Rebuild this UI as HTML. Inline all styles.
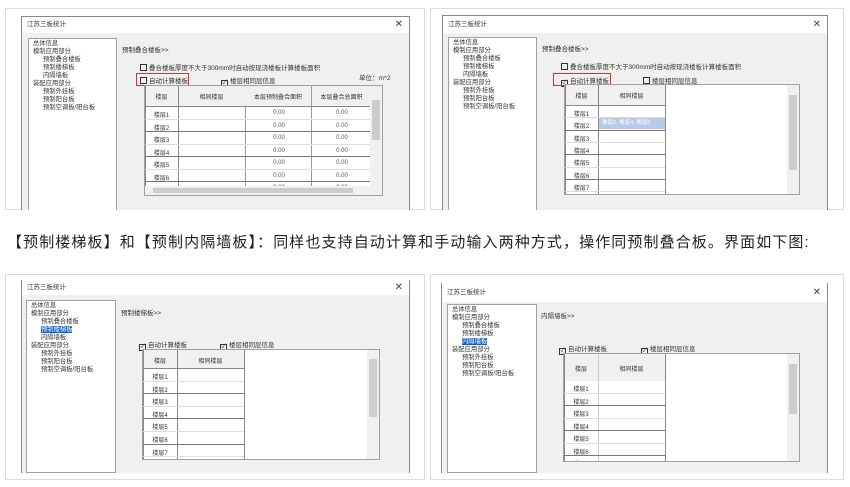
<!DOCTYPE html>
<html><head><meta charset="utf-8"><style>
*{margin:0;padding:0;box-sizing:border-box}
body{width:850px;height:487px;background:#fff;position:relative;overflow:hidden;font-family:"Liberation Sans","Noto Sans CJK SC",sans-serif;color:#222}
.a{position:absolute}
.frame{position:absolute;border:1px solid #dcdcdc;background:#fff}
.dlg{position:absolute;border:1px solid #8a8a8a;background:#f0f0f0;overflow:hidden}
.tb{position:absolute;left:0;top:0;right:0;background:#fff;font-size:6.5px;padding-left:5px;color:#333}
.x{position:absolute;right:6px;font-size:10px;color:#444}
.tree{position:absolute;background:#fff;border:1px solid #a0a0a0;font-size:6.3px;line-height:8px;padding:1px 4px;color:#333;white-space:nowrap}
.tree div{height:8px}
.tree div.i{padding-left:10px}
.sel{background:#0a64c8;color:#fff}
.t{font-size:6.5px;color:#333;white-space:nowrap}
.cb{display:inline-block;width:7px;height:7px;border:1px solid #333;vertical-align:-1px;margin-right:2px;font-size:6px;line-height:5px;text-align:center}
.red{position:absolute;border:1.5px solid #e0312b}
.tbl{position:absolute;background:#fff;border:1px solid #a0a0a0;overflow:hidden}
.g{position:absolute;font-size:6px;color:#333;text-align:center}
.sb{position:absolute;top:0;bottom:0;width:12px;background:#f0f0f0}
.th{position:absolute;width:8px;left:2px;background:#cdcdcd}
</style></head><body>

<!-- TOP LEFT -->
<div class="frame" style="left:5px;top:8px;width:420px;height:202px"></div>
<div class="dlg" style="left:21px;top:16px;width:389px;height:194px;border-bottom:none">
 <div class="tb" style="height:16px;line-height:16px">江苏三板统计<span class="x" style="top:0">✕</span></div>
 <div class="tree" style="left:6px;top:21px;width:89px;height:175px"><div>总体信息</div><div>模制应用部分</div><div class="i">预制叠合楼板</div><div class="i">预制楼梯板</div><div class="i">内隔墙板</div><div>装配应用部分</div><div class="i">预制外挂板</div><div class="i">预制阳台板</div><div class="i">预制空调板/阳台板</div></div>
 <div class="a t" style="left:100px;top:27px">预制叠合楼板&gt;&gt;</div>
 <div class="a t" style="left:118px;top:45px"><span class="cb"></span>叠合楼板厚度不大于300mm时自动按现浇楼板计算楼板面积</div>
 <div class="a t" style="left:118px;top:58px"><span class="cb"></span>自动计算楼板</div>
 <div class="red" style="left:114px;top:56px;width:53px;height:13px"></div>
 <div class="a t" style="left:199px;top:58px"><span class="cb">✓</span>楼层相同层信息</div>
 <div class="a t" style="left:337px;top:55px">单位：m^2</div>
</div>
<div class="tbl" style="left:144px;top:85px;width:239px;height:111px">
 <div class="a" style="left:0;top:0;width:227px;height:21px;background:#f0f0f0"></div>
 <div class="a" style="left:33px;top:0;width:1px;height:111px;background:#888"></div>
 <div class="a" style="left:0;top:0;width:1px;height:111px;background:#888"></div>
 <div class="a" style="left:100px;top:21px;width:1px;height:90px;background:#999"></div>
 <div class="a" style="left:166px;top:0;width:1px;height:111px;background:#999"></div>
 <div class="a" style="left:0;top:20px;width:227px;height:1px;background:#888"></div>
 <div class="g" style="left:0;top:6px;width:33px">楼层</div><div class="g" style="left:33px;top:6px;width:67px">相同楼层</div><div class="g" style="left:100px;top:6px;width:66px">本层预制叠合面积</div><div class="g" style="left:166px;top:6px;width:61px">本层叠合总面积</div>
 <div id="r1"></div>
 <div class="sb" style="right:0"><div class="th" style="top:14px;height:40px"></div></div>
 <div class="a" style="left:0;bottom:0;width:227px;height:9px;background:#f0f0f0"><div class="a" style="left:8px;top:2px;width:200px;height:5px;background:#cdcdcd"></div></div>
</div>

<!-- TOP RIGHT -->
<div class="frame" style="left:430px;top:8px;width:414px;height:202px"></div>
<div class="dlg" style="left:442px;top:15px;width:386px;height:195px;border-bottom:none">
 <div class="tb" style="height:17px;line-height:17px">江苏三板统计<span class="x" style="top:0">✕</span></div>
 <div class="tree" style="left:5px;top:21px;width:89px;height:175px"><div>总体信息</div><div>模制应用部分</div><div class="i">预制叠合楼板</div><div class="i">预制楼梯板</div><div class="i">内隔墙板</div><div>装配应用部分</div><div class="i">预制外挂板</div><div class="i">预制阳台板</div><div class="i">预制空调板/阳台板</div></div>
 <div class="a t" style="left:99px;top:27px">预制叠合楼板&gt;&gt;</div>
 <div class="a t" style="left:118px;top:45px"><span class="cb"></span>叠合楼板厚度不大于300mm时自动按现浇楼板计算楼板面积</div>
 <div class="a t" style="left:118px;top:59px"><span class="cb">✓</span>自动计算楼板</div>
 <div class="red" style="left:110px;top:57px;width:58px;height:13px"></div>
 <div class="a t" style="left:200px;top:59px"><span class="cb"></span>楼层相同层信息</div>
</div>
<div class="tbl" style="left:564px;top:84px;width:236px;height:111px">
 <div class="a" style="left:0;top:0;width:100px;height:21px;background:#f0f0f0"></div>
 <div class="a" style="left:0;top:0;width:1px;height:111px;background:#888"></div>
 <div class="a" style="left:33px;top:0;width:1px;height:111px;background:#888"></div>
 <div class="a" style="left:100px;top:0;width:1px;height:111px;background:#888"></div>
 <div class="a" style="left:0;top:20px;width:100px;height:1px;background:#888"></div>
 <div class="g" style="left:0;top:6px;width:33px">楼层</div><div class="g" style="left:33px;top:6px;width:67px">相同楼层</div>
 <div class="a" style="left:34px;top:32px;width:66px;height:12px;background:#b7cbe8;font-size:5.5px;color:#fff;line-height:12px;padding-left:3px">楼层2, 楼层4, 楼层5</div>
 <div id="r2"></div>
 <div class="sb" style="right:0"><div class="th" style="top:10px;height:75px"></div></div>
</div>

<!-- MIDDLE TEXT -->
<div class="a" style="left:7px;top:231px;font-size:15px;letter-spacing:1.1px;white-space:nowrap;color:#222">【预制楼梯板】和【预制内隔墙板】：同样也支持自动计算和手动输入两种方式，操作同预制叠合板。界面如下图:</div>

<!-- BOTTOM LEFT -->
<div class="frame" style="left:5px;top:274px;width:420px;height:206px"></div>
<div class="dlg" style="left:21px;top:280px;width:389px;height:193px;border-top:none;border-bottom:none">
 <div class="tb" style="height:15px;line-height:15px">江苏三板统计<span class="x" style="top:0">✕</span></div>
 <div class="tree" style="left:4px;top:20px;width:90px;height:173px"><div>总体信息</div><div>模制应用部分</div><div class="i">预制叠合楼板</div><div class="i"><span class="sel">预制楼梯板</span></div><div class="i">内隔墙板</div><div>装配应用部分</div><div class="i">预制外挂板</div><div class="i">预制阳台板</div><div class="i">预制空调板/阳台板</div></div>
 <div class="a t" style="left:99px;top:27px">预制楼梯板&gt;&gt;</div>
 <div class="a t" style="left:117px;top:59px"><span class="cb">✓</span>自动计算楼板</div>
 <div class="a t" style="left:198px;top:59px"><span class="cb">✓</span>楼层相同层信息</div>
</div>
<div class="tbl" style="left:142px;top:349px;width:238px;height:111px">
 <div class="a" style="left:0;top:0;width:101px;height:18px;background:#f0f0f0"></div>
 <div class="a" style="left:0;top:0;width:1px;height:111px;background:#888"></div>
 <div class="a" style="left:34px;top:0;width:1px;height:111px;background:#888"></div>
 <div class="a" style="left:101px;top:0;width:1px;height:111px;background:#888"></div>
 <div class="a" style="left:0;top:18px;width:101px;height:1px;background:#888"></div>
 <div class="g" style="left:0;top:6px;width:34px">楼层</div><div class="g" style="left:34px;top:6px;width:67px">相同楼层</div>
 <div id="r3"></div>
 <div class="sb" style="right:0"><div class="th" style="top:9px;height:58px"></div></div>
</div>

<!-- BOTTOM RIGHT -->
<div class="frame" style="left:430px;top:274px;width:414px;height:206px"></div>
<div class="dlg" style="left:441px;top:283px;width:387px;height:190px;border-top:none;border-bottom:none">
 <div class="tb" style="height:19px;line-height:19px">江苏三板统计<span class="x" style="top:0">✕</span></div>
 <div class="tree" style="left:5px;top:21px;width:90px;height:169px"><div>总体信息</div><div>模制应用部分</div><div class="i">预制叠合楼板</div><div class="i">预制楼梯板</div><div class="i"><span class="sel">内隔墙板</span></div><div>装配应用部分</div><div class="i">预制外挂板</div><div class="i">预制阳台板</div><div class="i">预制空调板/阳台板</div></div>
 <div class="a t" style="left:99px;top:27px">内隔墙板&gt;&gt;</div>
 <div class="a t" style="left:117px;top:60px"><span class="cb">✓</span>自动计算楼板</div>
 <div class="a t" style="left:199px;top:60px"><span class="cb">✓</span>楼层相同层信息</div>
</div>
<div class="tbl" style="left:563px;top:353px;width:237px;height:109px">
 <div class="a" style="left:0;top:0;width:101px;height:27px;background:#f0f0f0"></div>
 <div class="a" style="left:0;top:0;width:1px;height:109px;background:#888"></div>
 <div class="a" style="left:34px;top:0;width:1px;height:109px;background:#ccc"></div>
 <div class="a" style="left:101px;top:0;width:1px;height:109px;background:#888"></div>
 <div class="g" style="left:0;top:10px;width:34px">楼层</div><div class="g" style="left:34px;top:10px;width:67px">相同楼层</div>
 <div id="r4"></div>
 <div class="sb" style="right:0"><div class="th" style="top:10px;height:50px"></div></div>
</div>

<script>
function rows(id,top,h,n,w,lw,lab,vals){
 var el=document.getElementById(id),s='';
 for(var i=0;i<n;i++){var y=top+i*h;
  s+='<div class="a" style="left:0;top:'+(y+h-1)+'px;width:'+w+'px;height:1px;background:'+(i%2?'#777':'#ddd')+'"></div>';
  s+='<div class="g" style="left:0;top:'+(y+3)+'px;width:'+lw+'px">'+lab+(i+1)+'</div>';
  if(vals){s+='<div class="g" style="left:101px;top:'+(y+3)+'px;width:66px;color:#555">0.00</div><div class="g" style="left:167px;top:'+(y+3)+'px;width:60px;color:#555">0.00</div>';}
 }
 el.outerHTML=s;
}
rows('r1',21,12.5,7,227,33,'楼层',true);
rows('r2',21,12.3,8,100,33,'楼层',false);
rows('r3',19,12.6,8,101,34,'楼层',false);
rows('r4',27,12.5,7,101,34,'楼层',false);
</script>
</body></html>
